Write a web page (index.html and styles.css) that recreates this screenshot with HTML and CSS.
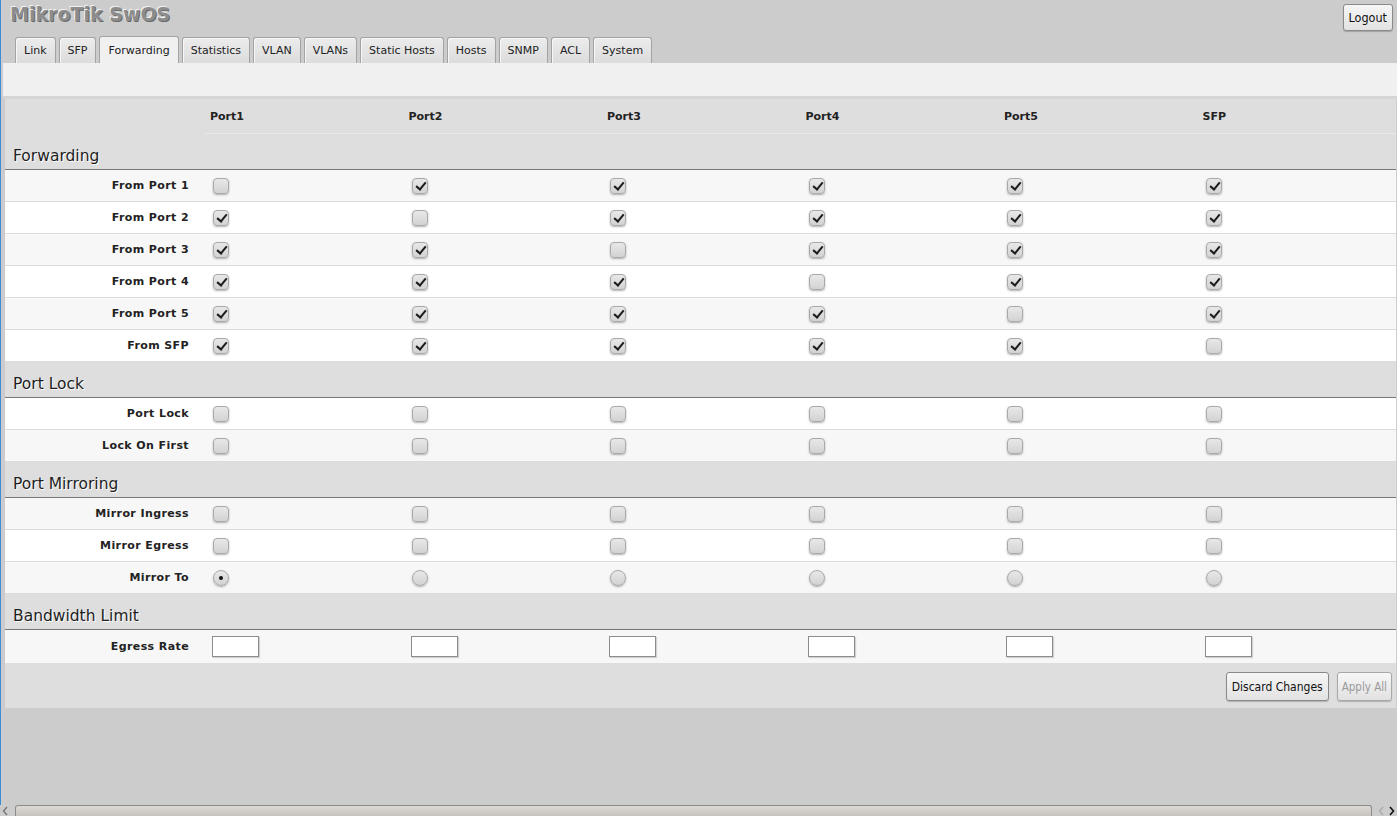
FILE: index.html
```html
<!DOCTYPE html>
<html lang="en">
<head>
    <meta charset="UTF-8">
    <title>MikroTik SwOS</title>
    <link rel="stylesheet" href="styles.css">
</head>
<body>
    <div class="page">
        <!-- Cabecera -->
        <div class="top">
            <h1 class="logo">MikroTik SwOS</h1>
            <button class="btn logout">Logout</button>
        </div>

        <!-- Pestañas -->
        <div class="tabs">
            <div class="tab">Link</div>
            <div class="tab">SFP</div>
            <div class="tab active">Forwarding</div>
            <div class="tab">Statistics</div>
            <div class="tab">VLAN</div>
            <div class="tab">VLANs</div>
            <div class="tab">Static Hosts</div>
            <div class="tab">Hosts</div>
            <div class="tab">SNMP</div>
            <div class="tab">ACL</div>
            <div class="tab">System</div>
        </div>

        <div class="notice"></div>

        <div class="grid">
            <div class="row head">
                <div></div>
                <div class="port">Port1</div>
                <div class="port">Port2</div>
                <div class="port">Port3</div>
                <div class="port">Port4</div>
                <div class="port">Port5</div>
                <div class="port">SFP</div>
            </div>

            <!-- Forwarding -->
            <div class="section">Forwarding</div>
            <div class="row odd">
                <div class="label">From Port 1</div>
                <div class="cell"><input type="checkbox" class="cb"></div>
                <div class="cell"><input type="checkbox" class="cb" checked></div>
                <div class="cell"><input type="checkbox" class="cb" checked></div>
                <div class="cell"><input type="checkbox" class="cb" checked></div>
                <div class="cell"><input type="checkbox" class="cb" checked></div>
                <div class="cell"><input type="checkbox" class="cb" checked></div>
            </div>
            <div class="row even">
                <div class="label">From Port 2</div>
                <div class="cell"><input type="checkbox" class="cb" checked></div>
                <div class="cell"><input type="checkbox" class="cb"></div>
                <div class="cell"><input type="checkbox" class="cb" checked></div>
                <div class="cell"><input type="checkbox" class="cb" checked></div>
                <div class="cell"><input type="checkbox" class="cb" checked></div>
                <div class="cell"><input type="checkbox" class="cb" checked></div>
            </div>
            <div class="row odd">
                <div class="label">From Port 3</div>
                <div class="cell"><input type="checkbox" class="cb" checked></div>
                <div class="cell"><input type="checkbox" class="cb" checked></div>
                <div class="cell"><input type="checkbox" class="cb"></div>
                <div class="cell"><input type="checkbox" class="cb" checked></div>
                <div class="cell"><input type="checkbox" class="cb" checked></div>
                <div class="cell"><input type="checkbox" class="cb" checked></div>
            </div>
            <div class="row even">
                <div class="label">From Port 4</div>
                <div class="cell"><input type="checkbox" class="cb" checked></div>
                <div class="cell"><input type="checkbox" class="cb" checked></div>
                <div class="cell"><input type="checkbox" class="cb" checked></div>
                <div class="cell"><input type="checkbox" class="cb"></div>
                <div class="cell"><input type="checkbox" class="cb" checked></div>
                <div class="cell"><input type="checkbox" class="cb" checked></div>
            </div>
            <div class="row odd">
                <div class="label">From Port 5</div>
                <div class="cell"><input type="checkbox" class="cb" checked></div>
                <div class="cell"><input type="checkbox" class="cb" checked></div>
                <div class="cell"><input type="checkbox" class="cb" checked></div>
                <div class="cell"><input type="checkbox" class="cb" checked></div>
                <div class="cell"><input type="checkbox" class="cb"></div>
                <div class="cell"><input type="checkbox" class="cb" checked></div>
            </div>
            <div class="row even">
                <div class="label">From SFP</div>
                <div class="cell"><input type="checkbox" class="cb" checked></div>
                <div class="cell"><input type="checkbox" class="cb" checked></div>
                <div class="cell"><input type="checkbox" class="cb" checked></div>
                <div class="cell"><input type="checkbox" class="cb" checked></div>
                <div class="cell"><input type="checkbox" class="cb" checked></div>
                <div class="cell"><input type="checkbox" class="cb"></div>
            </div>

            <!-- Port Lock -->
            <div class="section">Port Lock</div>
            <div class="row even">
                <div class="label">Port Lock</div>
                <div class="cell"><input type="checkbox" class="cb"></div>
                <div class="cell"><input type="checkbox" class="cb"></div>
                <div class="cell"><input type="checkbox" class="cb"></div>
                <div class="cell"><input type="checkbox" class="cb"></div>
                <div class="cell"><input type="checkbox" class="cb"></div>
                <div class="cell"><input type="checkbox" class="cb"></div>
            </div>
            <div class="row odd">
                <div class="label">Lock On First</div>
                <div class="cell"><input type="checkbox" class="cb"></div>
                <div class="cell"><input type="checkbox" class="cb"></div>
                <div class="cell"><input type="checkbox" class="cb"></div>
                <div class="cell"><input type="checkbox" class="cb"></div>
                <div class="cell"><input type="checkbox" class="cb"></div>
                <div class="cell"><input type="checkbox" class="cb"></div>
            </div>

            <!-- Port Mirroring -->
            <div class="section">Port Mirroring</div>
            <div class="row odd">
                <div class="label">Mirror Ingress</div>
                <div class="cell"><input type="checkbox" class="cb"></div>
                <div class="cell"><input type="checkbox" class="cb"></div>
                <div class="cell"><input type="checkbox" class="cb"></div>
                <div class="cell"><input type="checkbox" class="cb"></div>
                <div class="cell"><input type="checkbox" class="cb"></div>
                <div class="cell"><input type="checkbox" class="cb"></div>
            </div>
            <div class="row even">
                <div class="label">Mirror Egress</div>
                <div class="cell"><input type="checkbox" class="cb"></div>
                <div class="cell"><input type="checkbox" class="cb"></div>
                <div class="cell"><input type="checkbox" class="cb"></div>
                <div class="cell"><input type="checkbox" class="cb"></div>
                <div class="cell"><input type="checkbox" class="cb"></div>
                <div class="cell"><input type="checkbox" class="cb"></div>
            </div>
            <div class="row odd">
                <div class="label">Mirror To</div>
                <div class="cell"><input type="radio" name="mirror" class="cb rd" checked></div>
                <div class="cell"><input type="radio" name="mirror" class="cb rd"></div>
                <div class="cell"><input type="radio" name="mirror" class="cb rd"></div>
                <div class="cell"><input type="radio" name="mirror" class="cb rd"></div>
                <div class="cell"><input type="radio" name="mirror" class="cb rd"></div>
                <div class="cell"><input type="radio" name="mirror" class="cb rd"></div>
            </div>

            <!-- Bandwidth Limit -->
            <div class="section">Bandwidth Limit</div>
            <div class="row odd rate">
                <div class="label">Egress Rate</div>
                <div class="cell"><input type="text" class="txt"></div>
                <div class="cell"><input type="text" class="txt"></div>
                <div class="cell"><input type="text" class="txt"></div>
                <div class="cell"><input type="text" class="txt"></div>
                <div class="cell"><input type="text" class="txt"></div>
                <div class="cell"><input type="text" class="txt"></div>
            </div>

            <div class="actions">
                <button class="btn">Discard Changes</button>
                <button class="btn apply" disabled>Apply All</button>
            </div>
        </div>
    </div>

    <!-- Barra de desplazamiento -->
    <div class="hscroll">
        <svg class="arr" width="12" height="11" viewBox="0 0 12 11"><path d="M7 2 L3.5 6 L7 10" fill="none" stroke="#777" stroke-width="1.4"/></svg>
        <div class="thumb"></div>
        <svg class="arr" width="12" height="11" viewBox="0 0 12 11"><path d="M8 2 L4.5 6 L8 10" fill="none" stroke="#aaa" stroke-width="1.4"/></svg>
        <svg class="arr" width="10" height="11" viewBox="0 0 10 11"><path d="M3 2 L6.5 6 L3 10" fill="none" stroke="#111" stroke-width="1.6"/></svg>
    </div>
</body>
</html>
```

FILE: styles.css
```css
* {
    box-sizing: border-box;
}

html, body {
    margin: 0;
    height: 100%;
}

body {
    background-color: #cccccc;
    font-family: "DejaVu Sans", Verdana, sans-serif;
    font-size: 11px;
    color: #222;
    display: flex;
    flex-direction: column;
    overflow: hidden;
}

.page {
    flex: 1;
    border-left: 1px solid #3a8ed6;
}

/* Cabecera */
.top {
    display: flex;
    justify-content: space-between;
    align-items: flex-start;
    height: 37px;
}

.logo {
    margin: 0;
    padding: 5px 0 0 9px;
    font-family: "DejaVu Sans", Verdana, sans-serif;
    font-size: 19px;
    line-height: 19px;
    font-weight: bold;
    color: #8c8c8c;
    text-shadow: -1px -1px 0 #f2f2f2, 1px 1px 0 #6a6a6a;
}

.btn {
    height: 29px;
    padding: 0 5px;
    font-family: "DejaVu Sans Condensed", "DejaVu Sans", sans-serif;
    font-stretch: condensed;
    font-size: 12px;
    color: #111;
    background: linear-gradient(#f6f6f6, #e2e2e2);
    border: 1px solid #8a8a8a;
    border-radius: 3px;
    box-shadow: 0 1px 1px rgba(0, 0, 0, 0.2);
}

.btn:disabled {
    color: #9a9a9a;
    border-color: #a8a8a8;
}

.apply {
    padding: 0 4px;
    font-size: 11.5px;
}

.logout {
    height: 27px;
    margin: 4px 4px 0 0;
    font-size: 12.5px;
}

/* Pestañas */
.tabs {
    display: flex;
    align-items: flex-end;
    gap: 3px;
    height: 26px;
    padding-left: 14px;
}

.tab {
    height: 26px;
    padding: 1px 8px 0;
    line-height: 24px;
    border: 1px solid #a3a3a3;
    border-bottom: none;
    border-radius: 3px 3px 0 0;
    background: linear-gradient(#ececec, #dcdcdc);
    box-shadow: inset 1px 1px 0 #f7f7f7;
}

.tab.active {
    height: 27px;
    padding-top: 2px;
    background: #f0f0f0;
    box-shadow: none;
}

.notice {
    margin-left: 2px;
    height: 36px;
    background-color: #f0f0f0;
    border-bottom: 3px solid #d5d5d5;
}

/* Tabla */
.grid {
    margin: 0 1px 0 4px;
    background-color: #dedede;
}

.row {
    display: grid;
    grid-template-columns: 200px repeat(6, 1fr);
    align-items: center;
    height: 32px;
    border-bottom: 1px solid #dcdcdc;
}

.row.odd {
    background-color: #f7f7f7;
}

.row.even {
    background-color: #fff;
}

.row.rate {
    height: 33px;
    border-bottom: none;
}

.head {
    height: 35px;
    align-items: stretch;
    border-bottom: none;
}

.port {
    display: flex;
    align-items: center;
    padding-left: 5px;
    padding-top: 1px;
    font-weight: bold;
    border-bottom: 1px solid #e8e8e8;
}

.section {
    height: 36px;
    padding: 0 0 4px 8px;
    display: flex;
    align-items: flex-end;
    font-size: 15.5px;
    line-height: 18px;
    color: #1e1e1e;
    text-shadow: 1px 1px 0 #fff;
    border-bottom: 1px solid #777;
}

.label {
    text-align: right;
    padding-right: 16px;
    font-weight: bold;
    letter-spacing: 0.4px;
}

.cell {
    padding-left: 8px;
}

.cb {
    -webkit-appearance: none;
    appearance: none;
    display: block;
    position: relative;
    width: 16px;
    height: 16px;
    margin: 0;
    border: 1px solid #a9a9a9;
    border-radius: 4px;
    background: linear-gradient(#e8e8e8, #d3d3d3);
    box-shadow: 0 1px 2px rgba(0, 0, 0, 0.3);
}

.cb:checked::after {
    content: "";
    position: absolute;
    left: 5px;
    top: 1px;
    width: 4px;
    height: 8px;
    border: solid #1b1b1b;
    border-width: 0 2px 2px 0;
    transform: rotate(40deg);
}

.rd {
    border-radius: 50%;
}

.rd:checked::after {
    left: 5px;
    top: 5px;
    width: 4px;
    height: 4px;
    border: none;
    border-radius: 50%;
    background: #111;
    transform: none;
}

.txt {
    display: block;
    width: 47px;
    height: 21px;
    margin-left: -1px;
    border: 1px solid #8c8c8c;
    background: #fff;
    box-shadow: 1px 1px 1px rgba(0, 0, 0, 0.15);
}

.actions {
    display: flex;
    justify-content: flex-end;
    gap: 8px;
    padding: 9px 4px 7px 0;
}

/* Barra de desplazamiento */
.hscroll {
    display: flex;
    align-items: flex-end;
    height: 11px;
    background-color: #cccccc;
}

.arr {
    flex: none;
    display: block;
}

.thumb {
    flex: none;
    width: 1357px;
    height: 11px;
    margin: 0 3px 0 3px;
    border: 1px solid #8b8b8b;
    border-bottom: none;
    border-radius: 3px 3px 0 0;
    background: linear-gradient(#dcd8d4, #c6c2be);
}
```
